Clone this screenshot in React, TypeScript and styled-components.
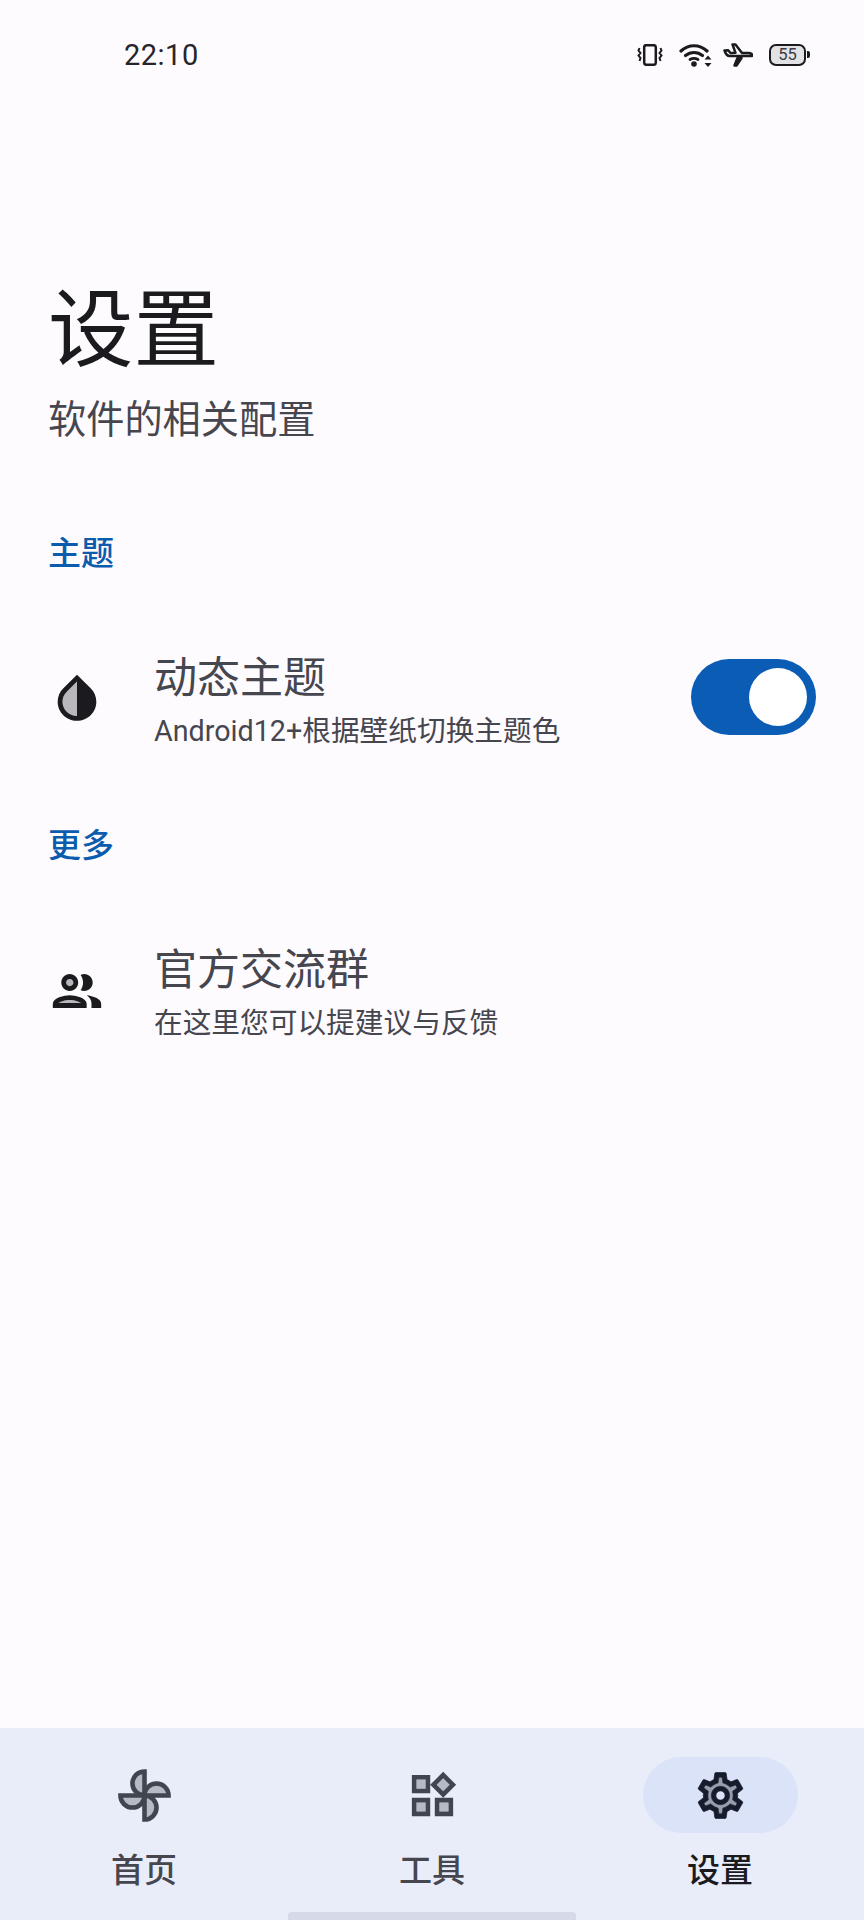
import React from 'react';
import styled, { createGlobalStyle } from 'styled-components';

const GlobalStyle = createGlobalStyle`
  html, body {
    margin: 0;
    padding: 0;
    background: #fefbff;
  }
  * {
    box-sizing: border-box;
  }
`;

const Screen = styled.div`
  width: 864px;
  height: 1920px;
  display: flex;
  flex-direction: column;
  background: #fefbff;
  color: #1b1b1f;
  font-family: Roboto, "Noto Sans CJK SC", sans-serif;
  overflow: hidden;
`;

const StatusBar = styled.div`
  height: 110px;
  display: flex;
  align-items: center;
  padding: 0 55px 0 124px;
`;

const Clock = styled.span`
  font-size: 29px;
  letter-spacing: 0.5px;
  color: #26262a;
`;

const StatusIcons = styled.div`
  margin-left: auto;
  display: flex;
  align-items: center;
`;

const StatusGlyph = styled.span<{ $gap: number }>`
  display: flex;
  margin-right: ${p => p.$gap}px;
`;

const Battery = styled.div`
  position: relative;
  width: 37px;
  height: 22px;
  margin-right: 3px;
  border: 2.5px solid #1b1b1f;
  border-radius: 7px;
  display: flex;
  align-items: center;
  justify-content: center;
  font-size: 16.5px;
  line-height: 1;
  color: #3a3a40;
  background: #e2e2e5;

  &::after {
    content: '';
    position: absolute;
    right: -5.5px;
    top: 5px;
    width: 3px;
    height: 7px;
    border-radius: 0 2px 2px 0;
    background: #1b1b1f;
  }
`;

const Content = styled.main`
  flex: 1;
  padding: 171px 48px 0 48px;
`;

const Title = styled.h1`
  margin: 0;
  font-size: 85.5px;
  line-height: 100px;
  font-weight: 400;
  color: #1b1b1f;
`;

const Subtitle = styled.p`
  margin: 14px 0 0;
  font-size: 38.2px;
  line-height: 50px;
  color: #46464f;
`;

const SectionLabel = styled.h2<{ $top: number }>`
  margin: ${p => p.$top}px 0 0;
  font-size: 33px;
  line-height: 44px;
  font-weight: 500;
  color: #0b5cad;
`;

const Row = styled.div<{ $top: number }>`
  margin-top: ${p => p.$top}px;
  display: flex;
  align-items: center;
`;

const RowIcon = styled.div`
  width: 58px;
  height: 58px;
  margin: 0 48px 4px 0;
  display: flex;
  color: #1b1b1f;
`;

const RowText = styled.div`
  flex: 1;
  display: flex;
  flex-direction: column;
  gap: 5px;
`;

const RowTitle = styled.div`
  font-size: 43px;
  line-height: 56px;
  color: #46464f;
`;

const RowSub = styled.div`
  font-size: 28.7px;
  line-height: 40px;
  color: #46464f;
`;

const Switch = styled.div`
  width: 125px;
  height: 76px;
  margin-bottom: 8px;
  border-radius: 38px;
  background: #0b5cb5;
  display: flex;
  align-items: center;
  justify-content: flex-end;
  padding-right: 9px;
`;

const SwitchThumb = styled.div`
  width: 58px;
  height: 58px;
  border-radius: 50%;
  background: #ffffff;
`;

const BottomNav = styled.nav`
  height: 192px;
  display: flex;
  flex-direction: column;
  background: #e9edf9;
`;

const Tabs = styled.div`
  flex: 1;
  display: grid;
  grid-template-columns: repeat(3, 288px);
  padding-top: 29px;
`;

const Tab = styled.div`
  display: flex;
  flex-direction: column;
  align-items: center;
`;

const IconPill = styled.div<{ $active?: boolean }>`
  width: 155px;
  height: 76px;
  border-radius: 38px;
  display: flex;
  align-items: center;
  justify-content: center;
  background: ${p => (p.$active ? '#dae3f8' : 'transparent')};
  color: ${p => (p.$active ? '#171c2c' : '#41454f')};
`;

const TabLabel = styled.span<{ $active?: boolean }>`
  margin-top: 16px;
  font-size: 33px;
  line-height: 44px;
  font-weight: 500;
  color: ${p => (p.$active ? '#1b1b1f' : '#46464f')};
`;

const HomeBar = styled.div`
  align-self: center;
  width: 288px;
  height: 8px;
  border-radius: 4px 4px 0 0;
  background: #d6dae8;
`;

const VibrateIcon = () => (
  <svg width="26" height="22" viewBox="0 0 26 22" fill="none" stroke="#1b1b1f" strokeWidth="2.5">
    <rect x="7.2" y="1.2" width="11.6" height="19.6" rx="2" />
    <path d="M2.5 4l-1 2.5 2 2.5-2 2.5 2 2.5-1 3M23.5 4l1 2.5-2 2.5 2 2.5-2 2.5 1 3" strokeWidth="2" />
  </svg>
);

const WifiIcon = () => (
  <svg width="33" height="24" viewBox="0 0 33 24" fill="none">
    <path d="M2 8C9.500 1 20.500 1 28 8" stroke="#1b1b1f" strokeWidth="3.2" strokeLinecap="round" />
    <path d="M6.500 12.500C11.500 8.500 18.500 8.500 23.500 12.500" stroke="#1b1b1f" strokeWidth="3.200" strokeLinecap="round" />
    <path d="M11 16.500C13.500 15 16.500 15 19 16.500" stroke="#1b1b1f" strokeWidth="2.800" strokeLinecap="round" />
    <circle cx="15" cy="21" r="2.800" fill="#1b1b1f" />
    <path d="M29 12.500l3.500 3.900h-7zM29 24l3.500-3.900h-7z" fill="#1b1b1f" />
  </svg>
);

const PlaneIcon = () => (
  <svg width="30" height="24" viewBox="0 0 30 24" fill="none" stroke="#1b1b1f" strokeWidth="2.500" strokeLinejoin="round">
    <path d="M1.500 7.500l3.500-.3 2.500 2.800 5-.2L9.500 1.500h3l6.500 8.500h6.500c3 0 4 1.500 3.500 3H6.500C4 13 2.500 10.500 1.500 7.500z" />
    <path d="M14.500 15h4l-5 7.500H11.500l3-7.500z" fill="#1b1b1f" />
  </svg>
);

const DropIcon = () => (
  <svg width="58" height="58" viewBox="0 0 24 24" fill="currentColor">
    <path d="M12 4.81V19c-3.31 0-6-2.63-6-5.87 0-1.56.62-3.03 1.75-4.14L12 4.81z" opacity="0.3" />
    <path d="M12 2L6.35 7.56C4.9 8.99 4 10.96 4 13.13 4 17.48 7.58 21 12 21s8-3.52 8-7.87c0-2.17-.9-4.14-2.35-5.57L12 2zm0 2.81V19c-3.31 0-6-2.63-6-5.87 0-1.56.62-3.03 1.75-4.14L12 4.81z" fillRule="evenodd" />
  </svg>
);

const GroupIcon = () => (
  <svg width="58" height="58" viewBox="0 0 24 24" fill="currentColor">
    <circle cx="9" cy="8.5" r="1.5" opacity="0.3" />
    <path d="M4.34 17h9.32c-.84-.58-2.87-1.25-4.66-1.25s-3.82.67-4.66 1.25z" opacity="0.3" />
    <path d="M9 13.75c-2.34 0-7 1.17-7 3.5V19h14v-1.75c0-2.33-4.66-3.5-7-3.5zM4.34 17c.84-.58 2.87-1.25 4.66-1.25s3.82.67 4.66 1.25H4.34zM9 12c1.93 0 3.5-1.57 3.5-3.5S10.93 5 9 5 5.5 6.57 5.5 8.5 7.07 12 9 12zm0-5c.83 0 1.5.67 1.5 1.5S9.83 10 9 10s-1.5-.67-1.5-1.5S8.17 7 9 7zm7.04 6.81c1.16.84 1.96 1.96 1.96 3.44V19h4v-1.75c0-2.02-3.5-3.17-5.96-3.44zM15 12c1.93 0 3.5-1.57 3.5-3.5S16.93 5 15 5c-.54 0-1.04.13-1.5.35.63.89 1 1.98 1 3.15s-.37 2.26-1 3.15c.46.22.96.35 1.5.35z" />
  </svg>
);

const FanIcon = () => (
  <svg width="55" height="55" viewBox="0 0 24 24" fill="none" stroke="currentColor" strokeWidth="2" strokeLinejoin="miter">
    <path d="M12 1.5A5.2 5.2 0 0 0 12 12Z" fill="#b6bac5" />
    <path d="M22.5 12A5.2 5.2 0 0 0 12 12Z" fill="#b6bac5" />
    <path d="M12 22.5A5.2 5.2 0 0 0 12 12Z" fill="#b6bac5" />
    <path d="M1.5 12A5.2 5.2 0 0 0 12 12Z" fill="#b6bac5" />
  </svg>
);

const WidgetsIcon = () => (
  <svg width="55" height="55" viewBox="0 0 24 24" fill="currentColor">
    <path d="M5 5h4v4H5zm10 10h4v4h-4zM5 15h4v4H5zM16.66 4.52l-2.83 2.82 2.83 2.83 2.83-2.83z" opacity="0.3" />
    <path d="M16.66 1.69L11 7.34 16.66 13l5.66-5.66-5.66-5.65zm-2.83 5.65l2.83-2.83 2.83 2.83-2.83 2.83-2.83-2.83zM3 3v8h8V3H3zm6 6H5V5h4v4zM3 21h8v-8H3v8zm2-6h4v4H5v-4zm8-2v8h8v-8h-8zm6 6h-4v-4h4v4z" />
  </svg>
);

const GearIcon = () => (
  <svg width="55" height="55" viewBox="0 0 24 24" fill="currentColor">
    <path d="M19.28 8.6l-.7-1.21-1.27.51-1.06.43-.91-.7c-.39-.3-.8-.54-1.23-.71l-1.06-.43-.16-1.13L12.7 4h-1.39l-.19 1.35-.16 1.13-1.06.43c-.41.17-.82.41-1.25.73l-.9.68-1.04-.42-1.27-.51-.7 1.21 1.08.84.89.7-.14 1.13c-.03.3-.05.53-.05.73s.02.43.05.73l.14 1.13-.89.7-1.08.84.7 1.21 1.27-.51 1.06-.43.91.7c.4.3.8.53 1.23.71l1.06.43.16 1.13.19 1.35h1.4l.2-1.35.16-1.13 1.06-.43c.41-.17.82-.41 1.25-.73l.9-.68 1.04.42 1.27.51.7-1.21-1.08-.84-.89-.7.14-1.13c.03-.3.05-.52.05-.73 0-.21-.01-.42-.05-.73l-.14-1.13.89-.7 1.07-.85zM12 16c-2.21 0-4-1.79-4-4s1.79-4 4-4 4 1.79 4 4-1.79 4-4 4z" opacity="0.35" />
    <path stroke="currentColor" strokeWidth="0.3" d="M19.43 12.98c.04-.32.07-.64.07-.98 0-.34-.03-.66-.07-.98l2.11-1.65c.19-.15.24-.42.12-.64l-2-3.46c-.09-.16-.26-.25-.44-.25-.06 0-.12.01-.17.03l-2.49 1c-.52-.4-1.08-.73-1.69-.98l-.38-2.65C14.46 2.18 14.25 2 14 2h-4c-.25 0-.46.18-.49.42l-.38 2.65c-.61.25-1.17.59-1.69.98l-2.49-1c-.06-.02-.12-.03-.18-.03-.17 0-.34.09-.43.25l-2 3.46c-.13.22-.07.49.12.64l2.11 1.65c-.04.32-.07.65-.07.98 0 .33.03.66.07.98l-2.11 1.65c-.19.15-.24.42-.12.64l2 3.46c.09.16.26.25.44.25.06 0 .12-.01.17-.03l2.49-1c.52.4 1.08.73 1.69.98l.38 2.65c.03.24.24.42.49.42h4c.25 0 .46-.18.49-.42l.38-2.65c.61-.25 1.17-.59 1.69-.98l2.49 1c.06.02.12.03.18.03.17 0 .34-.09.43-.25l2-3.46c.12-.22.07-.49-.12-.64l-2.11-1.65zm-1.98-1.71c.04.31.05.52.05.73 0 .21-.02.43-.05.73l-.14 1.13.89.7 1.08.84-.7 1.21-1.27-.51-1.04-.42-.9.68c-.43.32-.84.56-1.25.73l-1.06.43-.16 1.13-.2 1.35h-1.4l-.19-1.35-.16-1.13-1.06-.43c-.43-.18-.83-.41-1.23-.71l-.91-.7-1.06.43-1.27.51-.7-1.21 1.08-.84.89-.7-.14-1.13c-.03-.31-.05-.54-.05-.74s.02-.43.05-.73l.14-1.13-.89-.7-1.08-.84.7-1.21 1.27.51 1.04.42.9-.68c.43-.32.84-.56 1.25-.73l1.06-.43.16-1.13.2-1.35h1.39l.19 1.35.16 1.13 1.06.43c.43.18.83.41 1.23.71l.91.7 1.06-.43 1.27-.51.7 1.21-1.07.85-.89.7.14 1.13zM12 8c-2.21 0-4 1.79-4 4s1.79 4 4 4 4-1.79 4-4-1.79-4-4-4zm0 6c-1.1 0-2-.9-2-2s.9-2 2-2 2 .9 2 2-.9 2-2 2z" />
  </svg>
);

const App: React.FC = () => (
  <Screen>
    <GlobalStyle />
    <StatusBar>
      <Clock>22:10</Clock>
      <StatusIcons>
        <StatusGlyph $gap={16}><VibrateIcon /></StatusGlyph>
        <StatusGlyph $gap={11}><WifiIcon /></StatusGlyph>
        <StatusGlyph $gap={16}><PlaneIcon /></StatusGlyph>
        <Battery>55</Battery>
      </StatusIcons>
    </StatusBar>

    <Content>
      <Title>设置</Title>
      <Subtitle>软件的相关配置</Subtitle>

      <SectionLabel $top={87}>主题</SectionLabel>
      <Row $top={74}>
        <RowIcon><DropIcon /></RowIcon>
        <RowText>
          <RowTitle>动态主题</RowTitle>
          <RowSub>Android12+根据壁纸切换主题色</RowSub>
        </RowText>
        <Switch><SwitchThumb /></Switch>
      </Row>

      <SectionLabel $top={73}>更多</SectionLabel>
      <Row $top={74}>
        <RowIcon><GroupIcon /></RowIcon>
        <RowText>
          <RowTitle>官方交流群</RowTitle>
          <RowSub>在这里您可以提建议与反馈</RowSub>
        </RowText>
      </Row>
    </Content>

    <BottomNav>
      <Tabs>
        <Tab>
          <IconPill><FanIcon /></IconPill>
          <TabLabel>首页</TabLabel>
        </Tab>
        <Tab>
          <IconPill><WidgetsIcon /></IconPill>
          <TabLabel>工具</TabLabel>
        </Tab>
        <Tab>
          <IconPill $active><GearIcon /></IconPill>
          <TabLabel $active>设置</TabLabel>
        </Tab>
      </Tabs>
      <HomeBar />
    </BottomNav>
  </Screen>
);

export default App;
